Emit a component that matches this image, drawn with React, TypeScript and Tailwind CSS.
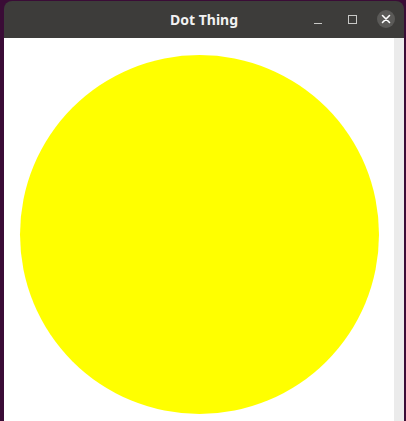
const App: React.FC = () => {
  return (
    <div className="h-[421px] w-[406px] overflow-hidden bg-[#3a0c36] pt-[1px] pl-[4px]">
      <div className="flex h-[420px] w-[400px] flex-col overflow-hidden rounded-t-[8px]">
        {/* Title bar */}
        <div className="relative flex h-[37px] shrink-0 items-center justify-center bg-[#3d3c3a]">
          <span
            className="text-[14px] font-bold text-[#f2f2f2]"
            style={{ fontFamily: '"Noto Sans", "DejaVu Sans", sans-serif' }}
          >
            Dot Thing
          </span>
          <div className="absolute right-[9px] top-[9px] flex items-center">
            <div className="mr-[16px] flex h-[18px] w-[18px] items-end justify-center pb-[4px]">
              <div className="h-[1px] w-[8px] bg-[#c8c8c6]" />
            </div>
            <div className="mr-[16px] flex h-[18px] w-[18px] items-center justify-center">
              <div className="h-[9px] w-[9px] border border-[#c8c8c6]" />
            </div>
            <div className="flex h-[18px] w-[18px] items-center justify-center rounded-full bg-[#5b5a58]">
              <svg width="10" height="10" viewBox="0 0 10 10">
                <path d="M1.5 1.5 L8.5 8.5 M8.5 1.5 L1.5 8.5" stroke="#ffffff" strokeWidth="1.6" strokeLinecap="round" />
              </svg>
            </div>
          </div>
        </div>
        {/* Content */}
        <div className="flex flex-1">
          <div className="flex-1 bg-white pl-[16px] pt-[17px]">
            <div className="h-[359px] w-[359px] rounded-full bg-[#ffff00]" />
          </div>
          <div className="w-[10px] bg-[#ebebeb]" />
        </div>
      </div>
    </div>
  );
};

export default App;
